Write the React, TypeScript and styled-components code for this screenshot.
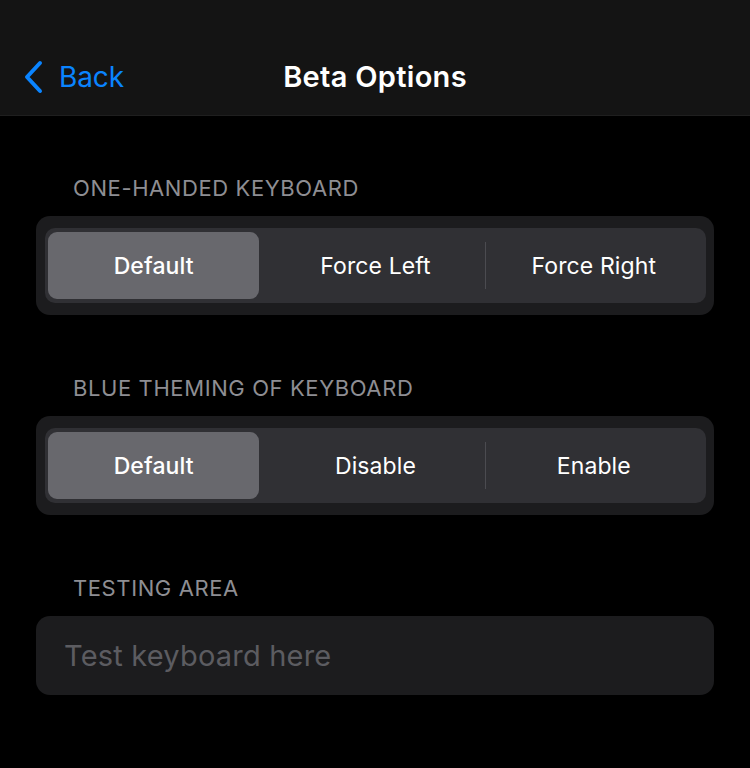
import React from "react";
import styled, { createGlobalStyle } from "styled-components";

const Global = createGlobalStyle`
  html, body { margin: 0; padding: 0; background: #000; }
  body { font-family: Inter, "Noto Sans", sans-serif; -webkit-font-smoothing: antialiased; }
`;

const Page = styled.div`
  width: 750px;
  height: 768px;
  background: #000;
  display: flex;
  flex-direction: column;
`;

const NavBar = styled.header`
  height: 116px;
  background: #141414;
  border-bottom: 1px solid #1f1f1f;
  display: grid;
  grid-template-columns: 1fr auto 1fr;
  align-items: end;
  padding: 0 22px 21px 22px;
  box-sizing: border-box;
`;

const BackButton = styled.div`
  display: flex;
  align-items: center;
  gap: 15px;
  color: #0a84ff;
  font-size: 28px;
  font-weight: 400;
  letter-spacing: -0.1px;
`;

const Title = styled.h1`
  margin: 0;
  color: #fff;
  font-size: 29px;
  font-weight: 600;
  letter-spacing: 0.3px;
`;

const Content = styled.main`
  display: flex;
  flex-direction: column;
  padding: 59px 36px 0 36px;
  gap: 60px;
`;

const Section = styled.section`
  display: flex;
  flex-direction: column;
  gap: 14px;
`;

const SectionHeader = styled.div`
  color: #8e8e93;
  font-size: 22px;
  line-height: 27px;
  letter-spacing: 0.6px;
  padding-left: 37px;
`;

const Card = styled.div`
  background: #1c1c1e;
  border-radius: 14px;
  padding: 12px 8px 12px 9px;
`;

const Segmented = styled.div`
  display: grid;
  grid-template-columns: repeat(3, 1fr);
  height: 75px;
  background: #303034;
  border-radius: 10px;
  padding: 4px 3px;
  box-sizing: border-box;
`;

const Segment = styled.div<{ $divider?: boolean }>`
  position: relative;
  display: flex;
  align-items: center;
  justify-content: center;
  color: #fff;
  font-size: 23px;
  font-weight: 400;
  letter-spacing: 0.1px;
  ${(p) =>
    p.$divider &&
    `&::before {
      content: "";
      position: absolute;
      left: 0;
      top: 10px;
      bottom: 10px;
      width: 1px;
      background: #4b4b50;
    }`}
`;

const Thumb = styled.div`
  flex: 1;
  align-self: stretch;
  margin-right: 7px;
  display: flex;
  align-items: center;
  justify-content: center;
  background: #68686d;
  border-radius: 9px;
  font-weight: 500;
`;

const InputCard = styled.div`
  background: #1c1c1e;
  border-radius: 14px;
  height: 79px;
  display: flex;
  align-items: center;
  padding-left: 28px;
  color: #5c5c61;
  font-size: 29px;
  letter-spacing: 0.2px;
`;

const Chevron = () => (
  <svg width="22" height="34" viewBox="0 0 22 34" fill="none">
    <path d="M18 3 L5 17 L18 31" stroke="#0a84ff" strokeWidth="4" strokeLinecap="round" strokeLinejoin="round" />
  </svg>
);

type SegProps = { options: string[]; selected: number };
const SegmentedControl = ({ options, selected }: SegProps) => (
  <Card>
    <Segmented>
      {options.map((o, i) => (
        <Segment key={o} $divider={i > 0 && i !== selected && i - 1 !== selected}>
          {i === selected ? <Thumb>{o}</Thumb> : o}
        </Segment>
      ))}
    </Segmented>
  </Card>
);

export default function App() {
  return (
    <Page>
      <Global />
      <NavBar>
        <BackButton>
          <Chevron />
          Back
        </BackButton>
        <Title>Beta Options</Title>
        <div />
      </NavBar>
      <Content>
        <Section>
          <SectionHeader>ONE-HANDED KEYBOARD</SectionHeader>
          <SegmentedControl options={["Default", "Force Left", "Force Right"]} selected={0} />
        </Section>
        <Section>
          <SectionHeader>BLUE THEMING OF KEYBOARD</SectionHeader>
          <SegmentedControl options={["Default", "Disable", "Enable"]} selected={0} />
        </Section>
        <Section>
          <SectionHeader>TESTING AREA</SectionHeader>
          <InputCard>Test keyboard here</InputCard>
        </Section>
      </Content>
    </Page>
  );
}
